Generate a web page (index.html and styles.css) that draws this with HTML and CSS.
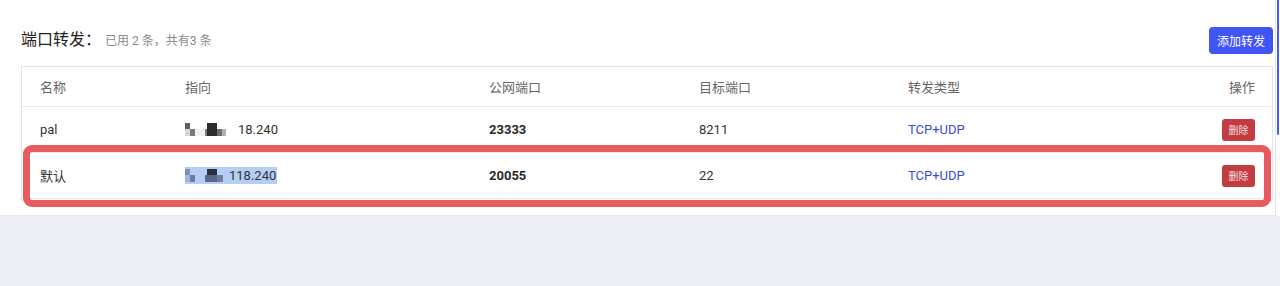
FILE: index.html
```html
<!DOCTYPE html>
<html lang="zh-CN">
<head>
<meta charset="utf-8">
<title>端口转发</title>
<link rel="stylesheet" href="styles.css">
</head>
<body>
<div class="panel">
  <div class="toolbar">
    <div class="title">端口转发：<span class="sub">已用 2 条，共有3 条</span></div>
    <button class="btn-add">添加转发</button>
  </div>
  <div class="table">
    <div class="row head">
      <div>名称</div><div>指向</div><div>公网端口</div><div>目标端口</div><div>转发类型</div><div class="op">操作</div>
    </div>
    <div class="row">
      <div>pal</div>
      <div class="ip">
        <svg class="mosaic" width="41" height="14" viewBox="0 0 41 14">
          <rect x="0" y="0" width="5" height="6" fill="#5e5e5e"/>
          <rect x="0" y="6" width="5" height="7" fill="#d6d6d6"/>
          <rect x="5" y="6" width="5" height="7" fill="#7a7a7a"/>
          <rect x="10" y="6" width="10" height="7" fill="#f0f0f0"/>
          <rect x="20" y="6" width="5" height="7" fill="#808080"/>
          <rect x="22" y="0" width="10" height="13" fill="#2c2c2c"/>
          <rect x="32" y="6" width="5" height="7" fill="#6e6e6e"/>
          <rect x="37" y="6" width="4" height="7" fill="#b0b0b0"/>
        </svg>
        <span class="ip-tail">18.240</span>
      </div>
      <div class="b">23333</div>
      <div>8211</div>
      <div class="type">TCP+UDP</div>
      <div class="op"><button class="btn-del">删除</button></div>
    </div>
    <div class="row">
      <div>默认</div>
      <div class="ip">
        <span class="sel"><svg class="mosaic" width="41" height="14" viewBox="0 0 41 14">
          <rect x="0" y="0" width="5" height="6" fill="#7f90b3"/>
          <rect x="0" y="6" width="5" height="7" fill="#a3b8df"/>
          <rect x="5" y="6" width="5" height="7" fill="#6c7ea5"/>
          <rect x="20" y="6" width="5" height="7" fill="#5d6b88"/>
          <rect x="22" y="0" width="10" height="6" fill="#2b303b"/>
          <rect x="22" y="6" width="10" height="7" fill="#5a6783"/>
          <rect x="32" y="6" width="6" height="7" fill="#6d7ea3"/>
        </svg><span class="ip-tail2">118.240</span></span>
      </div>
      <div class="b">20055</div>
      <div>22</div>
      <div class="type">TCP+UDP</div>
      <div class="op"><button class="btn-del">删除</button></div>
    </div>
  </div>
</div>
<div class="highlight"></div>
<div class="scrollbar"><div class="thumb"></div></div>
</body>
</html>
```
FILE: styles.css
```css
html, body {
  margin: 0;
  padding: 0;
}
body {
  background: #eeeef7;
  font-family: Roboto, "Noto Sans CJK SC", sans-serif;
  color: #333;
  height: 286px;
  overflow: hidden;
  position: relative;
}
.panel {
  background: #fff;
  padding: 27px 7px 14px 21px;
  border-bottom: 1px solid #e6e6ee;
}
.toolbar {
  display: flex;
  justify-content: space-between;
  align-items: flex-start;
  margin-bottom: 12px;
}
.title {
  font-family: "Noto Sans CJK SC", sans-serif;
  font-size: 16px;
  line-height: 22px;
  color: #222;
}
.sub {
  font-family: Roboto, "Noto Sans CJK SC", sans-serif;
  font-size: 12px;
  color: #8a8a8a;
  margin-left: 4px;
}
.btn-add {
  height: 27px;
  width: 64px;
  padding: 0;
  border: none;
  border-radius: 4px;
  background: #4154f6;
  color: #fff;
  font-family: "Noto Sans CJK SC", sans-serif;
  font-size: 12px;
  line-height: 27px;
}
.table {
  border: 1px solid #e3e3e8;
  padding-bottom: 1px;
}
.row {
  display: grid;
  grid-template-columns: 145px 304px 210px 209px 1fr auto;
  align-items: center;
  padding: 0 17px 0 18px;
  height: 45px;
  border-bottom: 1px solid #ebebf0;
  font-size: 13px;
  color: #333;
}
.row.head {
  height: 39px;
  color: #666;
  font-family: "Noto Sans CJK SC", sans-serif;
}
.op {
  text-align: right;
  display: flex;
  justify-content: flex-end;
}
.b {
  font-weight: 700;
  color: #2a2a2a;
}
.type {
  color: #3a4bd6;
}
.ip {
  display: flex;
  align-items: center;
}
.mosaic {
  display: block;
}
.ip-tail {
  margin-left: 12px;
  line-height: 17px;
}
.sel {
  display: flex;
  align-items: center;
  background: #b4cef6;
  height: 17px;
  padding-right: 1px;
}
.ip-tail2 {
  margin-left: 3px;
  line-height: 17px;
}
.btn-del {
  width: 33px;
  height: 22px;
  padding: 0;
  border: none;
  border-radius: 3px;
  background: #c33c43;
  color: #f6dede;
  font-family: "Noto Sans CJK SC", sans-serif;
  font-size: 10px;
  line-height: 22px;
}
.highlight {
  position: absolute;
  left: 23px;
  top: 145px;
  width: 1248px;
  height: 62px;
  box-sizing: border-box;
  border: 7px solid #e65b5f;
  border-radius: 9px;
  pointer-events: none;
}
.scrollbar {
  position: absolute;
  top: 0;
  right: 0;
  width: 3px;
  height: 216px;
  border-left: 1px solid #e4e4ea;
  background: #fff;
  padding-left: 1px;
}
.thumb {
  width: 2px;
  height: 135px;
  background: #4b5cf4;
  border-radius: 0 0 2px 2px;
}
```
